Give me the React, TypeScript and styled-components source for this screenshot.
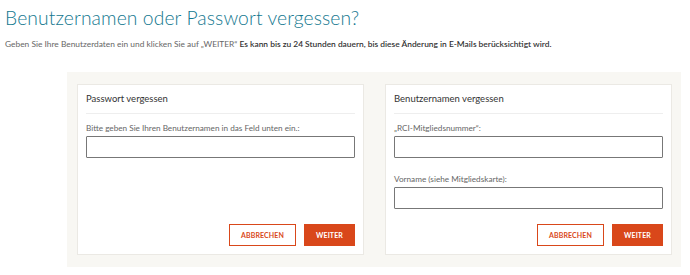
import React from "react";
import styled, { createGlobalStyle } from "styled-components";

const GlobalStyle = createGlobalStyle`
  html, body {
    margin: 0;
    padding: 0;
    background: #ffffff;
    font-family: Lato, "Liberation Sans", sans-serif;
  }
`;

const Page = styled.div({
  width: 690,
  height: 275,
  overflow: "hidden",
  boxSizing: "border-box",
  padding: "6px 0 0 5px",
});

const Title = styled.h1({
  margin: 0,
  fontSize: 19.3,
  lineHeight: "24px",
  fontWeight: 300,
  color: "#13788f",
  letterSpacing: 0.1,
});

const Intro = styled.p({
  margin: "8px 0 0",
  fontSize: 8.4,
  lineHeight: "12px",
  color: "#666",

  "& > strong": {
    fontWeight: 600,
    color: "#333",
  },
});

const Panel = styled.div({
  margin: "22px 0 0 62px",
  width: 614,
  boxSizing: "border-box",
  padding: "12px 10px",
  background: "#f8f7f3",
  display: "grid",
  gridTemplateColumns: "287px 287px",
  columnGap: 21,
});

const Card = styled.div({
  background: "#fff",
  border: "1px solid #ebe9e4",
  height: 171,
  boxSizing: "border-box",
  padding: "0 8px 8px",
  display: "flex",
  flexDirection: "column",
});

const CardTitle = styled.h2({
  margin: 0,
  fontSize: 9.5,
  fontWeight: 400,
  color: "#333",
  lineHeight: "28px",
  borderBottom: "1px solid #eeeeee",
});

const Field = styled.label({
  display: "block",
  marginTop: 8,
  "& + &": {
    marginTop: 15,
  },
});

const FieldLabel = styled.span({
  display: "block",
  fontSize: 8.2,
  lineHeight: "12px",
  color: "#666",
  marginBottom: 2,
});

const TextInput = styled.input({
  display: "block",
  width: "100%",
  height: 22,
  boxSizing: "border-box",
  border: "1px solid #777",
  borderRadius: 1,
  background: "#fff",
  margin: 0,
});

const Actions = styled.div({
  marginTop: "auto",
  display: "flex",
  justifyContent: "flex-end",
  gap: 8,
});

const Button = styled.button<{ $primary?: boolean }>(({ $primary }) => ({
  height: 22,
  boxSizing: "border-box",
  padding: "0 10px",
  minWidth: $primary ? 51 : 67,
  fontFamily: "Lato, 'Liberation Sans', sans-serif",
  fontSize: 7,
  fontWeight: 700,
  textTransform: "uppercase",
  letterSpacing: 0.1,
  border: "1px solid #d9471a",
  background: $primary ? "#d9471a" : "#fff",
  color: $primary ? "#fff" : "#d9471a",
  cursor: "pointer",
}));

export default function App() {
  return (
    <Page>
      <GlobalStyle />
      <Title>Benutzernamen oder Passwort vergessen?</Title>
      <Intro>
        Geben Sie Ihre Benutzerdaten ein und klicken Sie auf „WEITER“{" "}
        <strong>
          Es kann bis zu 24 Stunden dauern, bis diese Änderung in E-Mails
          berücksichtigt wird.
        </strong>
      </Intro>
      <Panel>
        <Card>
          <CardTitle>Passwort vergessen</CardTitle>
          <Field>
            <FieldLabel>
              Bitte geben Sie Ihren Benutzernamen in das Feld unten ein.:
            </FieldLabel>
            <TextInput type="text" />
          </Field>
          <Actions>
            <Button>Abbrechen</Button>
            <Button $primary>Weiter</Button>
          </Actions>
        </Card>
        <Card>
          <CardTitle>Benutzernamen vergessen</CardTitle>
          <Field>
            <FieldLabel>„RCI-Mitgliedsnummer“:</FieldLabel>
            <TextInput type="text" />
          </Field>
          <Field>
            <FieldLabel>Vorname (siehe Mitgliedskarte):</FieldLabel>
            <TextInput type="text" />
          </Field>
          <Actions>
            <Button>Abbrechen</Button>
            <Button $primary>Weiter</Button>
          </Actions>
        </Card>
      </Panel>
    </Page>
  );
}
